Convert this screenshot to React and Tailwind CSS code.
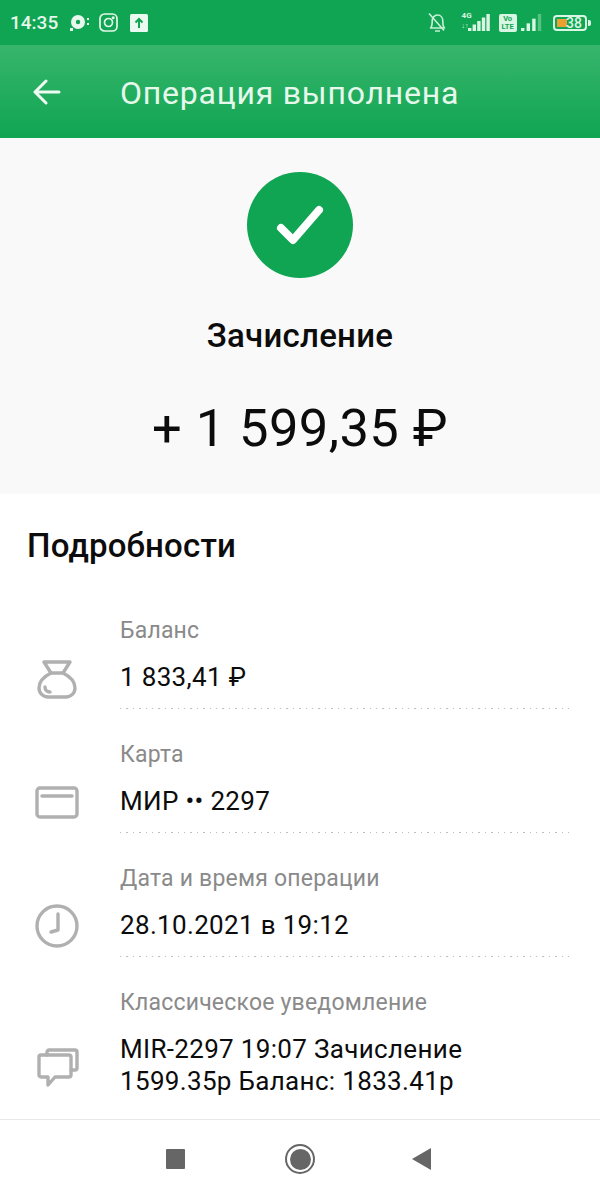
import React from "react";

const Bars = ({ n = 5, lit = 5, w = 3.4, gap = 4.6, h = 17 }) => (
  <svg width={n * gap} height={h} viewBox={`0 0 ${n * gap} ${h}`}>
    {Array.from({ length: n }).map((_, i) => {
      const bh = 3 + (i * (h - 3)) / (n - 1);
      return <rect key={i} x={i * gap} y={h - bh} width={w} height={bh} fill={i < lit ? "#d9f5e3" : "#58c283"} />;
    })}
  </svg>
);

const Row = ({ label, icon, iconClass, children, last }) => (
  <div className="flex">
    <div className={iconClass}>{icon}</div>
    <div className="flex-1 pr-[26px]">
      <div className="text-[23px] leading-[30px] text-[#8a8a8a] tracking-[0.2px]">{label}</div>
      <div className="mt-[15px] text-[26px] leading-[32px] text-[#0c0c0c] tracking-[0.33px]">{children}</div>
      {!last && (
        <div className="mt-[15px] mb-[31px] h-px bg-[repeating-linear-gradient(90deg,#bdbdbd_0,#bdbdbd_1.5px,transparent_1.5px,transparent_6.4px)]" />
      )}
    </div>
  </div>
);

const stroke = { fill: "none", stroke: "#b0b0b0", strokeWidth: 3.4, strokeLinecap: "round", strokeLinejoin: "round" };

export default function App() {
  return (
    <div className="w-[600px] h-[1198px] flex flex-col overflow-hidden bg-white font-['Roboto',sans-serif]">
      <div className="h-[45px] shrink-0 bg-[#10a552] flex items-center pl-[10px] pr-[13px] text-[#e4f7ea]">
        <span className="text-[19px] font-medium leading-none">14:35</span>
        <svg className="ml-[11px]" width="20" height="18" viewBox="0 0 20 18">
          <circle cx="9" cy="8" r="7" fill="#e8f8ee" />
          <circle cx="9" cy="8" r="2.2" fill="#10a552" />
          <rect x="1" y="14" width="3" height="3" fill="#e8f8ee" />
          <rect x="18" y="4" width="2" height="2" fill="#e8f8ee" />
          <rect x="18" y="9" width="2" height="2" fill="#e8f8ee" />
        </svg>
        <svg className="ml-[10px]" width="19" height="19" viewBox="0 0 19 19" fill="none" stroke="#e4f7ea" strokeWidth="1.7">
          <rect x="1" y="1" width="17" height="17" rx="4.5" />
          <circle cx="9.5" cy="9.5" r="4" />
          <circle cx="14.2" cy="4.8" r="0.7" fill="#e4f7ea" />
        </svg>
        <svg className="ml-[12px]" width="18" height="18" viewBox="0 0 18 18">
          <rect width="18" height="18" rx="1.5" fill="#eafaf0" />
          <path d="M9 14V5M5.5 8.5 9 5l3.5 3.5" fill="none" stroke="#10a552" strokeWidth="2" />
        </svg>
        <div className="flex-1" />
        <svg width="21" height="21" viewBox="0 0 21 21" fill="none" stroke="#c8f0d6" strokeWidth="1.6" strokeLinejoin="round">
          <path d="M3.5 16c1.7-1.5 1.7-4 1.7-6.8S7 3 10.5 3s5.3 3 5.3 6.2.2 5.3 1.7 6.8z" />
          <path d="M8 19h5M2 1.5l15 17" />
        </svg>
        <div className="ml-[14px] w-[6px] flex flex-col items-start text-[8px] font-bold leading-[9px] text-[#d9f5e3] -mt-[3px]">
          <span>4G</span>
          <span className="mt-[2px] text-[7px] whitespace-nowrap">↓↑</span>
        </div>
        <div><Bars n={5} lit={5} /></div>
        <div className="ml-[8px] w-[18px] h-[18px] rounded-[2px] bg-[#d9f5e3] flex flex-col items-center justify-center text-[7.5px] font-bold leading-[8px] text-[#10a552]">
          <span>Vo</span>
          <span>LTE</span>
        </div>
        <div className="ml-[4px]"><Bars n={4} lit={3} w={3.4} gap={5.6} /></div>
        <div className="ml-[10px] relative w-[34px] h-[16px] rounded-[4px] border-[2px] border-[#d9f5e3] flex items-center">
          <div className="absolute left-[2px] top-[2px] bottom-[2px] w-[10px] bg-[#eca032]" />
          <span className="relative ml-[11px] text-[14px] leading-none font-medium text-[#d9f5e3]">38</span>
          <div className="absolute right-[-6px] top-[3px] w-[3px] h-[6px] rounded-r-[2px] bg-[#d9f5e3]" />
        </div>
      </div>

      <div className="h-[93px] shrink-0 flex items-center bg-[linear-gradient(180deg,#37b56c_0%,#10a552_100%)] text-[#e6f8ec]">
        <svg className="ml-[33px]" width="28" height="26" viewBox="0 0 28 26" fill="none" stroke="#eefaf2" strokeWidth="3" strokeLinecap="round" strokeLinejoin="round">
          <path d="M26 13H2M13 2 2 13l11 11" />
        </svg>
        <span className="ml-[59px] pt-[2px] text-[32px] leading-none tracking-[0.78px]">Операция выполнена</span>
      </div>

      <div className="h-[356px] shrink-0 bg-[#f9f9f9] flex flex-col items-center pt-[34px]">
        <div className="w-[106px] h-[106px] rounded-full bg-[#10a552] flex items-center justify-center">
          <svg width="50" height="50" viewBox="0 0 50 50" fill="none" stroke="#fff" strokeWidth="8" strokeLinecap="round" strokeLinejoin="round">
            <path d="M6 28l12 12L44 10" />
          </svg>
        </div>
        <div className="mt-[39px] text-[33px] leading-[38px] font-medium text-[#0c0c0c] tracking-[0.25px]">Зачисление</div>
        <div className="mt-[44px] text-[52.5px] leading-[58px] text-[#0c0c0c] tracking-[0.4px]">+ 1 599,35 ₽</div>
      </div>

      <div className="flex-1 min-h-0 overflow-hidden bg-white">
        <div className="pl-[27px] pt-[32px] text-[33px] leading-[40px] font-medium text-[#0c0c0c] tracking-[0.2px]">Подробности</div>
        <div className="mt-[50px]">
          <Row
            label="Баланс"
            iconClass="w-[120px] shrink-0 h-[44px] mt-[42px] pr-[6px] flex items-center justify-center"
            icon={
              <svg width="40" height="40" viewBox="0 0 40 40" {...stroke}>
                <path d="M7 2h26l-7 11c6 3 12 8 12 15 0 5-4 9-9 9H11c-5 0-9-4-9-9 0-7 6-12 12-15z" />
                <path d="M14 13h12M8 27c0 3 2 5 5 5" />
              </svg>
            }
          >
            1 833,41 ₽
          </Row>
          <Row
            label="Карта"
            iconClass="w-[120px] shrink-0 h-[44px] mt-[40px] pr-[6px] flex items-center justify-center"
            icon={
              <svg width="44" height="33" viewBox="0 0 44 33" {...stroke}>
                <rect x="2" y="2" width="40" height="29" rx="3" />
                <path d="M7 10h30" />
              </svg>
            }
          >
            МИР •• 2297
          </Row>
          <Row
            label="Дата и время операции"
            iconClass="w-[120px] shrink-0 h-[44px] mt-[40px] pr-[6px] flex items-center justify-center"
            icon={
              <svg width="44" height="44" viewBox="0 0 44 44" {...stroke}>
                <circle cx="22" cy="22" r="20" />
                <path d="M23 10v16l-7 2" />
              </svg>
            }
          >
            28.10.2021 в 19:12
          </Row>
          <Row
            last
            label="Классическое уведомление"
            iconClass="w-[120px] shrink-0 h-[44px] mt-[58px] pr-[5px] flex items-center justify-center"
            icon={
              <svg width="42" height="40" viewBox="0 0 42 40" {...stroke}>
                <path d="M10 7V4a2 2 0 0 1 2-2h26a2 2 0 0 1 2 2v16a2 2 0 0 1-2 2h-4" />
                <path d="M4 7h28a2 2 0 0 1 2 2v18a2 2 0 0 1-2 2H18l-7 8v-8H4a2 2 0 0 1-2-2V9a2 2 0 0 1 2-2z" />
              </svg>
            }
          >
            MIR-2297 19:07 Зачисление 1599.35р Баланс: 1833.41р
          </Row>
        </div>
      </div>

      <div className="h-[79px] shrink-0 border-t border-[#e8e8e8] bg-white flex items-start pt-[29px]">
        <div className="ml-[166px] w-[19px] h-[20px] rounded-[1px] bg-[#666]" />
        <div className="ml-[100px] w-[30px] h-[30px] -mt-[5px] rounded-full border-[2.5px] border-[#666] flex items-center justify-center">
          <div className="w-[21px] h-[21px] rounded-full bg-[#666]" />
        </div>
        <svg className="ml-[97px] -mt-[1px]" width="20" height="22" viewBox="0 0 20 22">
          <path d="M19 0v22L0 11z" fill="#666" />
        </svg>
      </div>
    </div>
  );
}
